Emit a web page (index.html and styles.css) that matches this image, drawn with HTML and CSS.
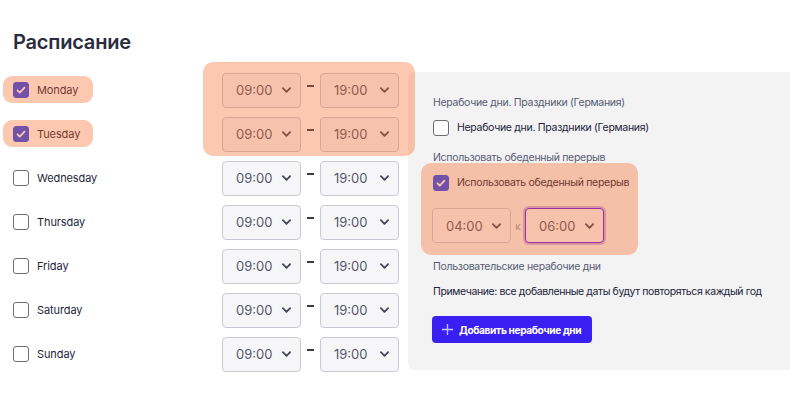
FILE: index.html
```html
<!DOCTYPE html>
<html lang="ru">
<head>
    <meta charset="UTF-8">
    <meta name="viewport" content="width=device-width, initial-scale=1.0">
    <title>Расписание</title>
    <link rel="stylesheet" href="styles.css">
</head>
<body>
    <main class="page">
        <h1 class="title">Расписание</h1>
        <div class="schedule">
            <div class="week">
                <div class="mark mark-times"></div>

                <div class="row">
                    <label class="day marked"><span class="check on"><svg viewBox="0 0 16 16"><path d="M4 8.3l2.6 2.6L12 5.4"/></svg></span>Monday</label>
                    <div class="times">
                        <div class="select"><span>09:00</span><svg class="chev" viewBox="0 0 10 6"><path d="M1 1l4 4 4-4"/></svg></div>
                        <span class="dash"></span>
                        <div class="select"><span>19:00</span><svg class="chev" viewBox="0 0 10 6"><path d="M1 1l4 4 4-4"/></svg></div>
                    </div>
                </div>
                <div class="row">
                    <label class="day marked"><span class="check on"><svg viewBox="0 0 16 16"><path d="M4 8.3l2.6 2.6L12 5.4"/></svg></span>Tuesday</label>
                    <div class="times">
                        <div class="select"><span>09:00</span><svg class="chev" viewBox="0 0 10 6"><path d="M1 1l4 4 4-4"/></svg></div>
                        <span class="dash"></span>
                        <div class="select"><span>19:00</span><svg class="chev" viewBox="0 0 10 6"><path d="M1 1l4 4 4-4"/></svg></div>
                    </div>
                </div>
                <div class="row">
                    <label class="day"><span class="check"></span>Wednesday</label>
                    <div class="times">
                        <div class="select"><span>09:00</span><svg class="chev" viewBox="0 0 10 6"><path d="M1 1l4 4 4-4"/></svg></div>
                        <span class="dash"></span>
                        <div class="select"><span>19:00</span><svg class="chev" viewBox="0 0 10 6"><path d="M1 1l4 4 4-4"/></svg></div>
                    </div>
                </div>
                <div class="row">
                    <label class="day"><span class="check"></span>Thursday</label>
                    <div class="times">
                        <div class="select"><span>09:00</span><svg class="chev" viewBox="0 0 10 6"><path d="M1 1l4 4 4-4"/></svg></div>
                        <span class="dash"></span>
                        <div class="select"><span>19:00</span><svg class="chev" viewBox="0 0 10 6"><path d="M1 1l4 4 4-4"/></svg></div>
                    </div>
                </div>
                <div class="row">
                    <label class="day"><span class="check"></span>Friday</label>
                    <div class="times">
                        <div class="select"><span>09:00</span><svg class="chev" viewBox="0 0 10 6"><path d="M1 1l4 4 4-4"/></svg></div>
                        <span class="dash"></span>
                        <div class="select"><span>19:00</span><svg class="chev" viewBox="0 0 10 6"><path d="M1 1l4 4 4-4"/></svg></div>
                    </div>
                </div>
                <div class="row">
                    <label class="day"><span class="check"></span>Saturday</label>
                    <div class="times">
                        <div class="select"><span>09:00</span><svg class="chev" viewBox="0 0 10 6"><path d="M1 1l4 4 4-4"/></svg></div>
                        <span class="dash"></span>
                        <div class="select"><span>19:00</span><svg class="chev" viewBox="0 0 10 6"><path d="M1 1l4 4 4-4"/></svg></div>
                    </div>
                </div>
                <div class="row">
                    <label class="day"><span class="check"></span>Sunday</label>
                    <div class="times">
                        <div class="select"><span>09:00</span><svg class="chev" viewBox="0 0 10 6"><path d="M1 1l4 4 4-4"/></svg></div>
                        <span class="dash"></span>
                        <div class="select"><span>19:00</span><svg class="chev" viewBox="0 0 10 6"><path d="M1 1l4 4 4-4"/></svg></div>
                    </div>
                </div>
            </div>

            <aside class="panel">
                <p class="field-label">Нерабочие дни. Праздники (Германия)</p>
                <label class="opt holidays"><span class="check"></span>Нерабочие дни. Праздники (Германия)</label>

                <p class="field-label lunch-label">Использовать обеденный перерыв</p>
                <div class="lunch">
                    <label class="opt"><span class="check on"><svg viewBox="0 0 16 16"><path d="M4 8.3l2.6 2.6L12 5.4"/></svg></span>Использовать обеденный перерыв</label>
                    <div class="lunch-times">
                        <div class="select"><span>04:00</span><svg class="chev" viewBox="0 0 10 6"><path d="M1 1l4 4 4-4"/></svg></div>
                        <span class="to">к</span>
                        <div class="select focus"><span>06:00</span><svg class="chev" viewBox="0 0 10 6"><path d="M1 1l4 4 4-4"/></svg></div>
                    </div>
                </div>

                <p class="field-label custom-label">Пользовательские нерабочие дни</p>
                <p class="note">Примечание: все добавленные даты будут повторяться каждый год</p>
                <button class="add-btn"><svg viewBox="0 0 14 14"><path d="M7 1v12M1 7h12"/></svg>Добавить нерабочие дни</button>
            </aside>
        </div>
    </main>
</body>
</html>
```

FILE: styles.css
```css
body {
    margin: 0;
    background: #fff;
    font-family: 'Inter', 'Noto Sans', sans-serif;
    color: #1e1f3b;
}
.page {
    width: 790px;
    height: 417px;
    padding: 29px 0 0 13px;
    box-sizing: border-box;
    overflow: hidden;
}
.title {
    margin: 0;
    font-size: 20px;
    line-height: 26px;
    font-weight: 600;
    color: #2a2c40;
    letter-spacing: -0.2px;
}
.schedule {
    display: flex;
    align-items: flex-start;
    margin-top: 13px;
}
.week {
    position: relative;
    width: 395px;
    flex: none;
}
.row {
    display: flex;
    align-items: center;
    height: 44px;
}
.day {
    position: relative;
    display: flex;
    align-items: center;
    gap: 8px;
    width: 209px;
    font-size: 11px;
    letter-spacing: -0.1px;
    color: #1e1f3b;
}
.check {
    width: 14px;
    height: 14px;
    border: 1px solid #6d6d75;
    border-radius: 3px;
    background: #fff;
    flex: none;
    display: flex;
}
.check.on {
    background: #2a49f2;
    border-color: #2a49f2;
}
.check svg {
    width: 14px;
    height: 14px;
    fill: none;
    stroke: #fff;
    stroke-width: 2;
    stroke-linecap: round;
    stroke-linejoin: round;
}
.times {
    display: flex;
    align-items: center;
}
.select {
    width: 79px;
    height: 35px;
    box-sizing: border-box;
    border: 1px solid #c9c9d3;
    border-radius: 4px;
    background: #f6f6f9;
    display: flex;
    align-items: center;
    justify-content: space-between;
    padding: 0 9px 0 13px;
    font-size: 13px;
    color: #55566a;
}
.chev {
    width: 9px;
    height: 6px;
    fill: none;
    stroke: #444556;
    stroke-width: 2;
    stroke-linecap: round;
    stroke-linejoin: round;
}
.dash {
    width: 7px;
    height: 2px;
    background: #3a3b4c;
    margin: 0 6px 8px;
}
.panel {
    flex: 1;
    margin-top: 4px;
    padding: 24px 20px 27px 25px;
    background: #f3f3f3;
    border-radius: 6px 0 0 6px;
    letter-spacing: -0.3px;
}
.field-label {
    margin: 0;
    font-size: 10.5px;
    line-height: 14px;
    color: #575b72;
}
.opt {
    position: relative;
    display: flex;
    align-items: center;
    gap: 8px;
    font-size: 10.5px;
    line-height: 16px;
    color: #22233a;
}
.holidays {
    margin-top: 10px;
}
.lunch-label {
    margin-top: 15px;
}
.lunch {
    position: relative;
    margin-top: 10px;
}
.lunch-times {
    display: flex;
    align-items: center;
    margin-top: 17px;
    margin-left: -1px;
    letter-spacing: 0;
}
.to {
    font-size: 10px;
    color: #9a9aa6;
    width: 14px;
    text-align: center;
}
.select.focus {
    border-color: #6a16e0;
    box-shadow: 0 0 0 2px #c3b3e6;
}
.custom-label {
    margin-top: 17px;
}
.note {
    margin: 11px 0 0;
    font-size: 10.5px;
    line-height: 14px;
    letter-spacing: -0.4px;
    color: #22233a;
    white-space: nowrap;
}
.add-btn {
    margin: 17px 0 0 -1px;
    height: 27px;
    width: 160px;
    display: flex;
    align-items: center;
    gap: 5px;
    padding: 0 9px;
    border: none;
    border-radius: 4px;
    background: #3a1ff2;
    color: #fff;
    font-family: inherit;
    font-size: 10.2px;
    font-weight: 700;
    letter-spacing: -0.4px;
    white-space: nowrap;
}
.add-btn svg {
    width: 13px;
    height: 13px;
    flex: none;
    fill: none;
    stroke: #c9c4ff;
    stroke-width: 1.4;
}

/* highlight marks lying over the content */
.mark,
.marked::after,
.lunch::after {
    content: '';
    position: absolute;
    background: rgba(249, 98, 29, 0.35);
    pointer-events: none;
}
.marked::after {
    left: -10px;
    top: -6px;
    width: 90px;
    height: 27px;
    border-radius: 9px;
}
.mark-times {
    left: 190px;
    top: -6px;
    width: 212px;
    height: 94px;
    border-radius: 10px;
    z-index: 2;
}
.lunch::after {
    left: -12px;
    top: -12px;
    width: 217px;
    height: 92px;
    border-radius: 10px;
}
```
